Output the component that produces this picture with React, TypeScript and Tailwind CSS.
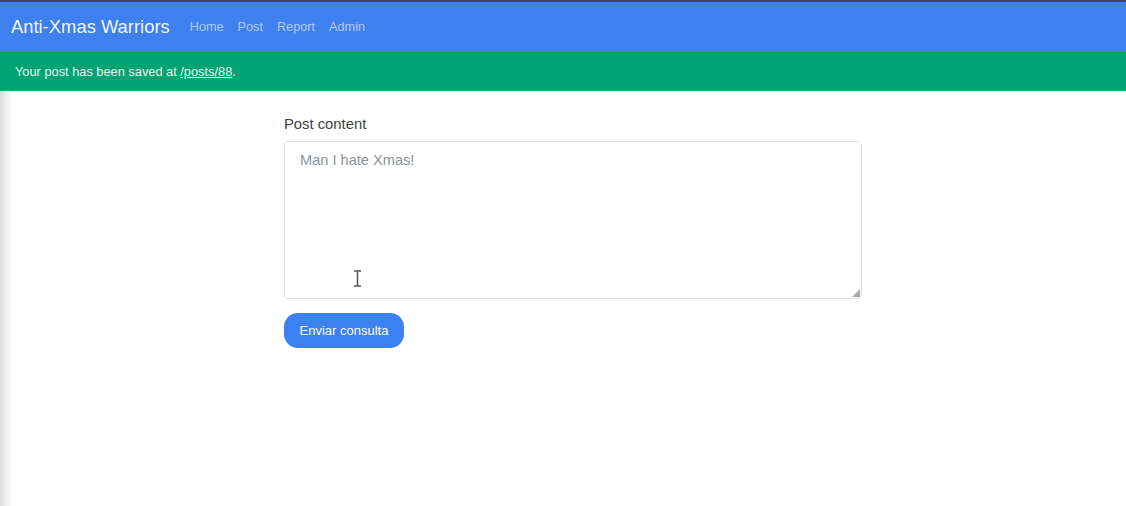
export default function App() {
  return (
    <div className="min-h-[506px] bg-white font-['Liberation_Sans',Arial,sans-serif]">
      <div className="h-[2px] bg-[#3d4452]" />
      <nav className="flex h-[50px] items-center bg-[#3f80ef] pl-[11px]">
        <span className="text-[18.4px] text-white/95">Anti-Xmas Warriors</span>
        <div className="ml-[20px] mt-[2px] flex gap-[14px] text-[12.7px] text-white/60">
          <span>Home</span>
          <span>Post</span>
          <span>Report</span>
          <span>Admin</span>
        </div>
      </nav>
      <div className="flex h-[39px] items-center bg-[#00a372] pl-[15px] text-[12.8px] text-white/90">
        Your post has been saved at&nbsp;<span className="underline">/posts/88</span>.
      </div>
      <div className="flex min-h-[415px]">
        <div className="w-[12px] bg-gradient-to-r from-[#dcdcdc] to-white" />
        <main className="ml-[272px] w-[578px] pt-[22px]">
          <label className="block text-[14.8px] text-[#404040]">Post content</label>
          <div className="relative mt-[6px]">
            <textarea
              className="block h-[158px] w-full resize-none rounded-[4px] border border-[#e1e4e8] px-[15px] py-[8px] text-[14.6px] text-[#333] placeholder:text-[#8e9399] focus:outline-none"
              placeholder="Man I hate Xmas!"
            />
            <svg className="absolute bottom-[2px] right-[2px]" width="8" height="8" viewBox="0 0 8 8">
              <path d="M8 0V8H0Z" fill="#a8a8a8" />
            </svg>
            <svg className="absolute left-[69px] top-[129px]" width="9" height="17" viewBox="0 0 9 17">
              <path d="M1 1h7M1 16h7M4.5 1v15" stroke="#555" strokeWidth="1.5" fill="none" />
            </svg>
          </div>
          <button className="mt-[14px] h-[35px] w-[120px] rounded-[14px] bg-[#3d80ef] text-[13px] text-white">
            Enviar consulta
          </button>
        </main>
      </div>
    </div>
  );
}
